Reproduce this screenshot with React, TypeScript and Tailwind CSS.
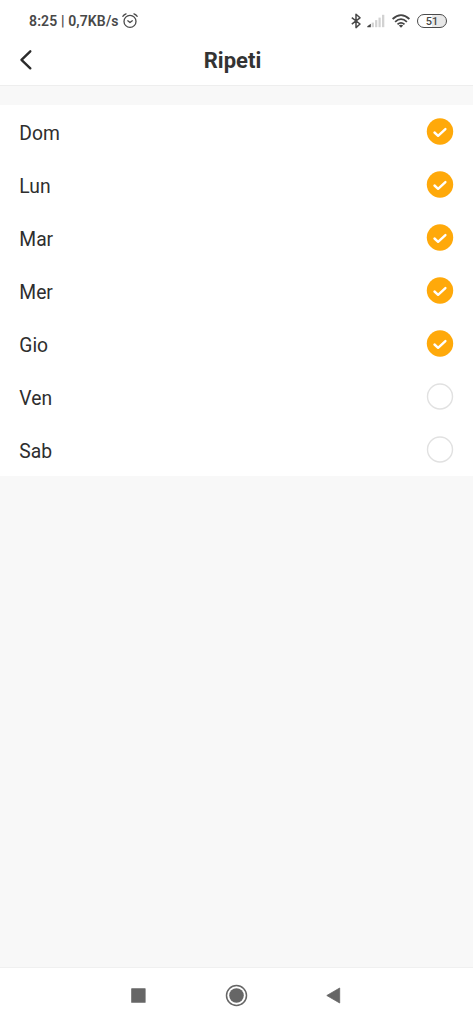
import React, { useState } from 'react';

interface Day {
  label: string;
  selected: boolean;
}

const initialDays: Day[] = [
  { label: 'Dom', selected: true },
  { label: 'Lun', selected: true },
  { label: 'Mar', selected: true },
  { label: 'Mer', selected: true },
  { label: 'Gio', selected: true },
  { label: 'Ven', selected: false },
  { label: 'Sab', selected: false },
];

const AlarmIcon = () => (
  <svg width="16" height="16" viewBox="0 0 16 16" fill="none" stroke="#4a4a4a" strokeWidth="1.3" strokeLinecap="round">
    <circle cx="8" cy="8.4" r="6" />
    <path d="M5.8 7.8 L8 9.6 L10.3 7.8" strokeLinejoin="round" />
    <path d="M0.8 3.3 Q2 1.5 4 0.8 M12 0.8 Q14 1.5 15.2 3.3" />
  </svg>
);

const BluetoothIcon = () => (
  <svg width="10" height="16" viewBox="0 0 10 16" fill="none" stroke="#484848" strokeWidth="1.5" strokeLinejoin="round">
    <path d="M0.8 4.6 L9 11 L5 14.6 V1.2 L9 4.8 L0.8 11.2" />
  </svg>
);

const SignalIcon = () => (
  <svg width="18" height="14" viewBox="0 0 18 14">
    <path d="M0.3 13.2 V12.2 L3.8 9.8 V13.2 Z" fill="#444444" />
    <g fill="#d2d2d2">
      <rect x="4.7" y="8.6" width="2.2" height="4.6" />
      <rect x="8.1" y="6.1" width="2.2" height="7.1" />
      <rect x="11.5" y="3.6" width="2.2" height="9.6" />
      <rect x="15" y="0.8" width="2.3" height="12.4" />
    </g>
  </svg>
);

const WifiIcon = () => (
  <svg width="18" height="14" viewBox="0 0 18 14" fill="none" stroke="#454545" strokeWidth="1.8">
    <path d="M0.6 5 Q9 -2.7 17.4 5" />
    <path d="M3.1 7.8 Q9 2.5 14.9 7.8" />
    <path d="M5.5 10.4 Q9 7.3 12.5 10.4" />
    <path d="M6.8 11.6 Q9 9.9 11.2 11.6 L9 13.8 Z" fill="#454545" stroke="none" />
  </svg>
);

const StatusBar = () => (
  <div className="flex h-[34px] items-center pt-[7px] pr-[26px] pl-[29px] text-[#484848]">
    <span className="w-[90px] text-[14px] leading-4 font-semibold tracking-[0.13px] whitespace-pre">8:25 | 0,7KB/s</span>
    <span className="ml-[3px]"><AlarmIcon /></span>
    <div className="ml-auto flex items-center">
      <BluetoothIcon />
      <span className="ml-[6px]"><SignalIcon /></span>
      <span className="ml-[7px]"><WifiIcon /></span>
      <span className="ml-[7px] flex h-[14px] w-[30px] items-center justify-center rounded-full border-[1.5px] border-[#4a4a4a] bg-linear-to-r from-white from-50% to-[#e8e8e8] to-50% pt-px text-[11px] leading-none font-medium">
        51
      </span>
    </div>
  </div>
);

const Header = () => (
  <header className="grid h-[52px] grid-cols-[1fr_auto_1fr] items-center border-b border-[#eeeeee] pr-[27px] pl-[19px]">
    <button type="button" aria-label="Indietro" className="justify-self-start">
      <svg width="14" height="22" viewBox="0 0 14 22" fill="none" stroke="#2b2b2b" strokeWidth="2.4" strokeLinecap="round" strokeLinejoin="round">
        <path d="M11.3 2.3 L2.5 10.8 L11.3 19.3" />
      </svg>
    </button>
    <h1 className="pt-[2px] text-[22px] leading-7 font-bold text-[#333333]">Ripeti</h1>
  </header>
);

const CheckMark = ({ checked }: { checked: boolean }) => (
  <svg width="28" height="28" viewBox="0 0 28 28" fill="none">
    {checked ? (
      <>
        <circle cx="14" cy="13.5" r="13.2" fill="#ffa90a" />
        <path d="M8.5 14.5 L12.1 17.8 L19.4 11.1" stroke="#ffffff" strokeWidth="2.4" strokeLinecap="round" strokeLinejoin="round" />
      </>
    ) : (
      <circle cx="14" cy="13.5" r="12.5" fill="#ffffff" stroke="#e1e1e1" strokeWidth="1.4" />
    )}
  </svg>
);

const NavBar = () => (
  <nav className="flex h-[57px] items-center border-t border-[#f0f0f0] bg-white pb-[2px] pl-[131px]">
    <svg width="15" height="15" viewBox="0 0 15 15">
      <rect x="0.2" y="0.2" width="14.4" height="14.6" rx="0.6" fill="#666666" />
    </svg>
    <svg className="ml-[79px]" width="23" height="23" viewBox="0 0 23 23">
      <circle cx="11.5" cy="11.5" r="10" fill="none" stroke="#666666" strokeWidth="1.5" />
      <circle cx="11.5" cy="11.5" r="7.3" fill="#666666" />
    </svg>
    <svg className="ml-[78px]" width="15" height="17" viewBox="0 0 15 17">
      <path d="M0.8 8.5 L13.7 1 V16 Z" fill="#666666" stroke="#666666" strokeWidth="0.8" strokeLinejoin="round" />
    </svg>
  </nav>
);

export default function App() {
  const [days, setDays] = useState<Day[]>(initialDays);

  const toggleDay = (index: number) => {
    setDays(days.map((day, i) => (i === index ? { ...day, selected: !day.selected } : day)));
  };

  return (
    <div className="flex h-screen flex-col bg-[#f8f8f8] font-['Roboto',sans-serif]">
      <div className="bg-white">
        <StatusBar />
        <Header />
      </div>

      <main className="mt-[19px] flex-1">
        <ul className="bg-white">
          {days.map((day, i) => (
            <li key={day.label}>
              <button
                type="button"
                role="checkbox"
                aria-checked={day.selected}
                onClick={() => toggleDay(i)}
                className="flex h-[53px] w-full items-center justify-between pr-[19px] pl-[19.3px]"
              >
                <span className="pt-[5px] text-[19.3px] leading-6 text-[#2e2e2e]">{day.label}</span>
                <CheckMark checked={day.selected} />
              </button>
            </li>
          ))}
        </ul>
      </main>

      <NavBar />
    </div>
  );
}
